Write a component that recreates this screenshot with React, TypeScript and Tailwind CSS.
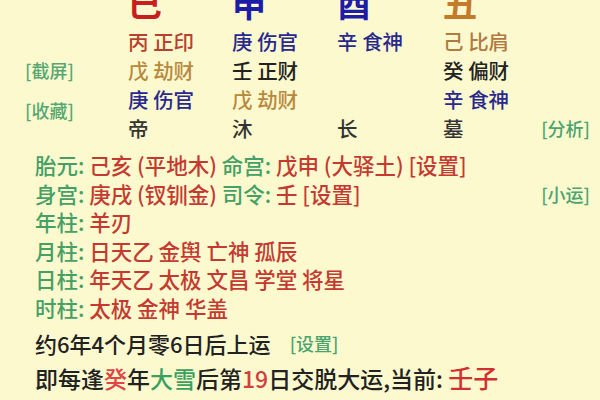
import React from "react";

const G = "text-[#45a066]";
const R = "text-[#c43a30]";

function Cell({ a, b, ca, cb }: { a?: string; b?: string; ca?: string; cb?: string }) {
  return (
    <div className="h-[29px] leading-[29px] whitespace-nowrap">
      {a ? <span className={ca}>{a}</span> : null}
      {b ? <span className={cb ?? ca}> {b}</span> : null}
    </div>
  );
}

function Col({
  big,
  bigColor,
  rows,
  w,
}: {
  big: string;
  bigColor: string;
  rows: { a?: string; b?: string; ca?: string; cb?: string }[];
  w: string;
}) {
  return (
    <div className={`${w} flex flex-col`}>
      <div className={`text-[34px] leading-[34px] font-bold ${bigColor} mb-[7px]`}>{big}</div>
      {rows.map((r, i) => (
        <Cell key={i} {...r} />
      ))}
    </div>
  );
}

export default function App() {
  const red = "text-[#b8402e]";
  const blue = "text-[#28288e]";
  const gold = "text-[#b8883c]";
  const dark = "text-[#222222]";
  const brown = "text-[#b07a40]";
  const grey = "text-[#333333]";
  return (
    <div
      className="w-[600px] h-[400px] overflow-hidden bg-[#fcf9cf] text-[20.5px] font-medium"
      style={{ fontFamily: '"Noto Sans CJK SC", "Noto Sans", sans-serif' }}
    >
      <div className="flex mt-[-14px] pr-[10px]">
        <div className="w-[128px] pl-[25px] pt-[72px] flex flex-col gap-[16px] text-[18px] leading-[24px] text-[#55a872]">
          <div>[截屏]</div>
          <div>[收藏]</div>
        </div>
        <Col
          w="w-[104px]"
          big="巳"
          bigColor="text-[#c81e1e]"
          rows={[
            { a: "丙", b: "正印", ca: red },
            { a: "戊", b: "劫财", ca: gold },
            { a: "庚", b: "伤官", ca: blue },
            { a: "帝", ca: grey },
          ]}
        />
        <Col
          w="w-[105px]"
          big="申"
          bigColor="text-[#1c1ca8]"
          rows={[
            { a: "庚", b: "伤官", ca: blue },
            { a: "壬", b: "正财", ca: dark },
            { a: "戊", b: "劫财", ca: gold },
            { a: "沐", ca: grey },
          ]}
        />
        <Col
          w="w-[106px]"
          big="酉"
          bigColor="text-[#1c1ca8]"
          rows={[
            { a: "辛", b: "食神", ca: blue },
            {},
            {},
            { a: "长", ca: grey },
          ]}
        />
        <Col
          w="w-[97px]"
          big="丑"
          bigColor="text-[#c47a2a]"
          rows={[
            { a: "己", b: "比肩", ca: brown },
            { a: "癸", b: "偏财", ca: dark },
            { a: "辛", b: "食神", ca: blue },
            { a: "墓", ca: grey },
          ]}
        />
        <div className="flex-1 flex flex-col justify-end">
          <div className="h-[29px] leading-[29px] text-[18px] text-right text-[#4aa470]">[分析]</div>
        </div>
      </div>

      <div className="mt-[8px] pl-[35px] pr-[10px] flex flex-col text-[21.5px]">
        <div className="leading-[28.6px] whitespace-nowrap">
          <span className={G}>胎元: </span>
          <span className={R}>己亥 (平地木) </span>
          <span className={G}>命宫: </span>
          <span className={R}>戊申 (大驿土) [设置]</span>
        </div>
        <div className="leading-[28.6px] whitespace-nowrap flex justify-between">
          <div>
            <span className={G}>身宫: </span>
            <span className={R}>庚戌 (钗钏金) </span>
            <span className={G}>司令: </span>
            <span className={R}>壬 [设置]</span>
          </div>
          <div className="text-[18px] text-[#4aa470]">[小运]</div>
        </div>
        <div className="leading-[28.6px] whitespace-nowrap">
          <span className={G}>年柱: </span>
          <span className={R}>羊刃</span>
        </div>
        <div className="leading-[28.6px] whitespace-nowrap">
          <span className={G}>月柱: </span>
          <span className={R}>日天乙 金舆 亡神 孤辰</span>
        </div>
        <div className="leading-[28.6px] whitespace-nowrap">
          <span className={G}>日柱: </span>
          <span className={R}>年天乙 太极 文昌 学堂 将星</span>
        </div>
        <div className="leading-[28.6px] whitespace-nowrap">
          <span className={G}>时柱: </span>
          <span className={R}>太极 金神 华盖</span>
        </div>
        <div className="mt-[3px] h-[34px] leading-[34px] whitespace-nowrap text-[22px] text-[#222222] flex items-center gap-[19px]">
          <span>约6年4个月零6日后上运</span>
          <span className="text-[18px] text-[#4aa470]">[设置]</span>
        </div>
        <div className="h-[34px] leading-[34px] whitespace-nowrap text-[23px] text-[#222222]">
          即每逢<span className="text-[#e04444]">癸</span>年<span className="text-[#3aa060]">大雪</span>后第
          <span className="text-[#d04040]">19</span>日交脱大运,当前: <span className="text-[25px] text-[#d03030]">壬子</span>
        </div>
      </div>
    </div>
  );
}
